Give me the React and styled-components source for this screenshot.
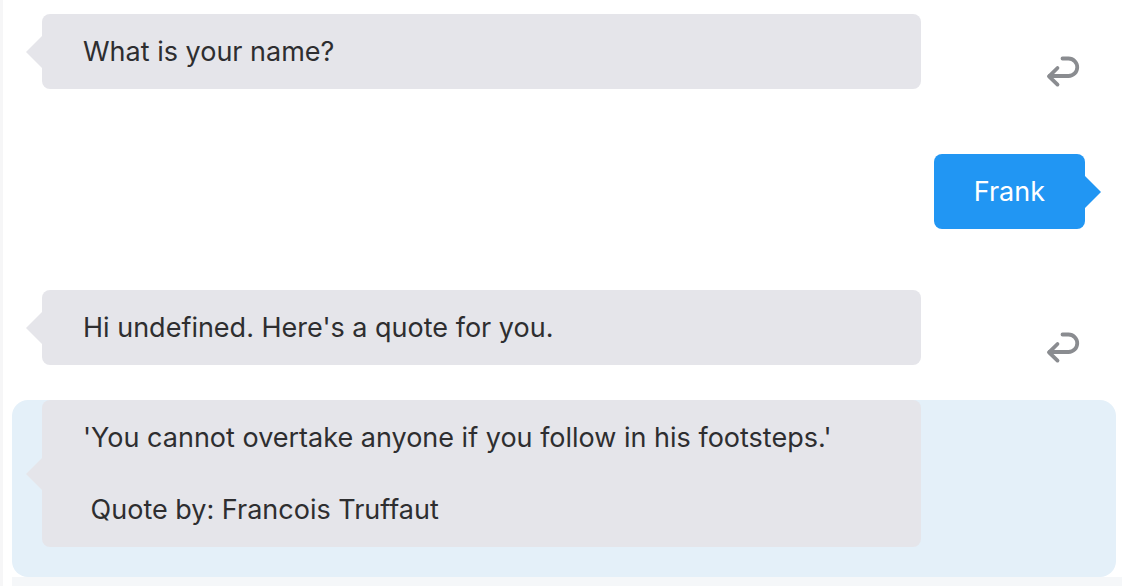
import React from "react"
import styled, { createGlobalStyle, css } from "styled-components"

const GlobalStyle = createGlobalStyle`
  html, body {
    margin: 0;
    padding: 0;
    background: #ffffff;
  }
  body {
    font-family: Inter, "Noto Sans", "Liberation Sans", sans-serif;
    -webkit-font-smoothing: antialiased;
  }
`

const Chat = styled.div`
  height: 586px;
  overflow: hidden;
  border-left: 3px solid #f6f6f7;
  padding-left: 9px;
  box-sizing: border-box;
`

const Row = styled.div`
  display: flex;
  align-items: flex-end;
  margin-top: ${(p) => p.gap}px;
  ${(p) =>
    p.user &&
    css`
      justify-content: flex-end;
      padding-right: 37px;
    `}
  ${(p) =>
    p.highlight &&
    css`
      width: 1104px;
      background: #e4f0f9;
      border-radius: 16px;
      padding-bottom: 30px;
    `}
`

const Bubble = styled.div`
  position: relative;
  box-sizing: border-box;
  border-radius: 8px;
  padding: 20px 41px 19px;
  font-size: 27px;
  line-height: 36px;
  white-space: pre-wrap;
  color: ${(p) => (p.user ? "#ffffff" : "#2e2e30")};
  background: ${(p) => (p.user ? "#2196f3" : "#e5e5ea")};
  width: ${(p) => (p.user ? "auto" : "879px")};
  margin-left: ${(p) => (p.user ? 0 : 30)}px;
  ${(p) =>
    p.user &&
    css`
      padding-left: 40px;
      padding-right: 40px;
    `}

  &::before {
    content: "";
    position: absolute;
    top: 50%;
    transform: translateY(-50%);
    border-top: 16px solid transparent;
    border-bottom: 16px solid transparent;
    ${(p) =>
      p.user
        ? css`
            right: -16px;
            border-left: 16px solid #2196f3;
          `
        : css`
            left: -16px;
            border-right: 16px solid #e5e5ea;
          `}
  }
`

const ReplyButton = styled.button`
  border: none;
  background: none;
  padding: 0;
  margin: 0 0 0 123px;
  width: 40px;
  height: 40px;
  display: flex;
  cursor: pointer;
  transform: translateY(4px);
`

const NextStrip = styled.div`
  height: 12px;
  background: #f5f7f9;
`

const ReplyIcon = () => (
  <svg width="40" height="40" viewBox="0 0 40 40" fill="none">
    <path
      d="M18.5 5.5H24.5A8.75 8.75 0 0 1 24.5 23H5.5"
      stroke="#8a8c90"
      strokeWidth="3.8"
      strokeLinecap="round"
      strokeLinejoin="round"
    />
    <path
      d="M13.5 15L5 23.3L13.5 31.6"
      stroke="#8a8c90"
      strokeWidth="3.8"
      strokeLinecap="round"
      strokeLinejoin="round"
    />
  </svg>
)

const messages = [
  { id: 1, gap: 14, text: "What is your name?" },
  { id: 2, gap: 65, text: "Frank", user: true },
  { id: 3, gap: 61, text: "Hi undefined. Here's a quote for you." },
  {
    id: 4,
    gap: 35,
    highlight: true,
    text: "'You cannot overtake anyone if you follow in his footsteps.'\n\n Quote by: Francois Truffaut",
  },
]

const App = () => (
  <React.Fragment>
    <GlobalStyle />
    <Chat>
      {messages.map(({ id, gap, text, user, highlight }) => (
        <Row key={id} gap={gap} user={user} highlight={highlight}>
          <Bubble user={user}>{text}</Bubble>
          {!user && !highlight && (
            <ReplyButton aria-label="Reply">
              <ReplyIcon />
            </ReplyButton>
          )}
        </Row>
      ))}
      <NextStrip />
    </Chat>
  </React.Fragment>
)

export default App
